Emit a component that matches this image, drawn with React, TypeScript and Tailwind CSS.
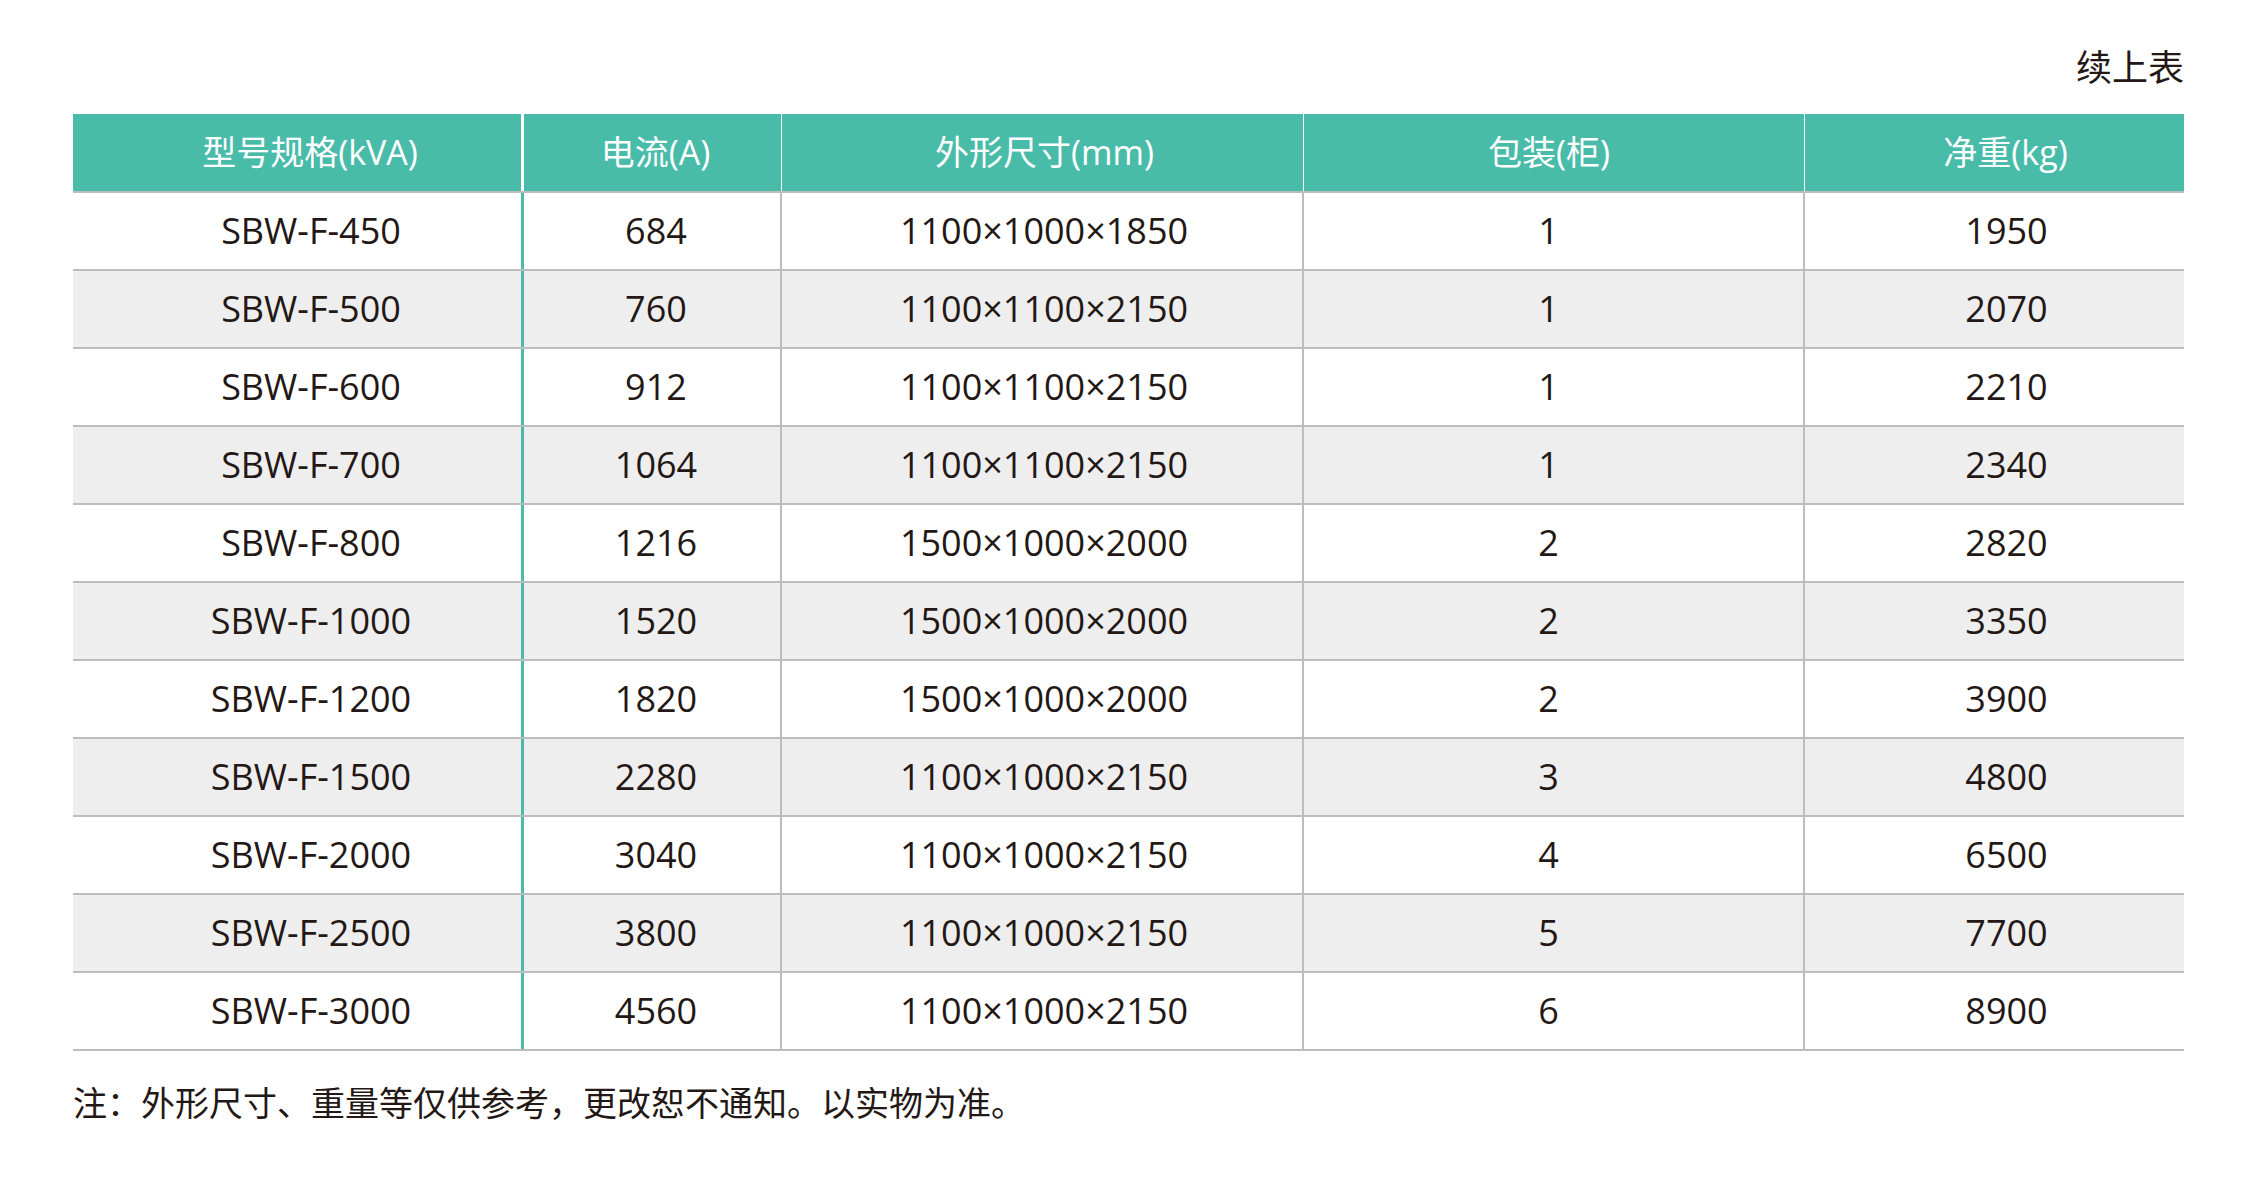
const font = "font-['Open_Sans','Noto_Sans_CJK_SC',sans-serif]";

type Row = [string, string, string, string, string];

const ROWS: Row[] = [
  ["SBW-F-450", "684", "1100×1000×1850", "1", "1950"],
  ["SBW-F-500", "760", "1100×1100×2150", "1", "2070"],
  ["SBW-F-600", "912", "1100×1100×2150", "1", "2210"],
  ["SBW-F-700", "1064", "1100×1100×2150", "1", "2340"],
  ["SBW-F-800", "1216", "1500×1000×2000", "2", "2820"],
  ["SBW-F-1000", "1520", "1500×1000×2000", "2", "3350"],
  ["SBW-F-1200", "1820", "1500×1000×2000", "2", "3900"],
  ["SBW-F-1500", "2280", "1100×1000×2150", "3", "4800"],
  ["SBW-F-2000", "3040", "1100×1000×2150", "4", "6500"],
  ["SBW-F-2500", "3800", "1100×1000×2150", "5", "7700"],
  ["SBW-F-3000", "4560", "1100×1000×2150", "6", "8900"],
];

const HEADERS = ["型号规格(kVA)", "电流(A)", "外形尺寸(mm)", "包装(柜)", "净重(kg)"];

// per-column nudges so text sits where the print layout put it
const headCell = [
  "w-[451px] pl-[26px] border-r-[3px] border-white",
  "w-[258px] pl-[6px] border-r border-white",
  "w-[522px] pl-[4px] border-r border-white",
  "w-[501px] pr-[10px] border-r border-white",
  "w-[379px] pl-[22px]",
];

const bodyCell = [
  "w-[451px] pl-[28px] border-r-[3px] border-[#4abba9]",
  "w-[258px] pl-[8px] border-r-2 border-[#bdbdbd]",
  "w-[522px] pl-[4px] border-r-2 border-[#bdbdbd]",
  "w-[501px] pr-[10px] border-r-2 border-[#bdbdbd]",
  "w-[379px] pl-[24px]",
];

export default function App() {
  return (
    <div className={`min-h-screen bg-white text-[#231815] ${font}`}>
      <div className="pl-[73px] pr-[67px] pt-[50px]">
        <div className="text-right text-[36px] leading-none">续上表</div>

        <div className="mt-[28px] w-[2111px]">
          <div className="flex h-[79px] bg-[#49bba9] border-b-2 border-[#bdbdbd] text-white text-[34px]">
            {HEADERS.map((h, i) => (
              <div key={h} className={`flex items-center justify-center shrink-0 ${headCell[i]}`}>
                {h}
              </div>
            ))}
          </div>

          {ROWS.map((row, r) => (
            <div
              key={row[0]}
              className={`flex h-[78px] border-b-2 border-[#bdbdbd] text-[36px] ${
                r % 2 === 1 ? "bg-[#eeeeee]" : "bg-white"
              }`}
            >
              {row.map((v, i) => (
                <div key={i} className={`flex items-center justify-center shrink-0 ${bodyCell[i]}`}>
                  {v}
                </div>
              ))}
            </div>
          ))}
        </div>

        <p className="mt-[35px] text-[34px] leading-none">
          注：外形尺寸、重量等仅供参考，更改恕不通知。以实物为准。
        </p>
      </div>
    </div>
  );
}
